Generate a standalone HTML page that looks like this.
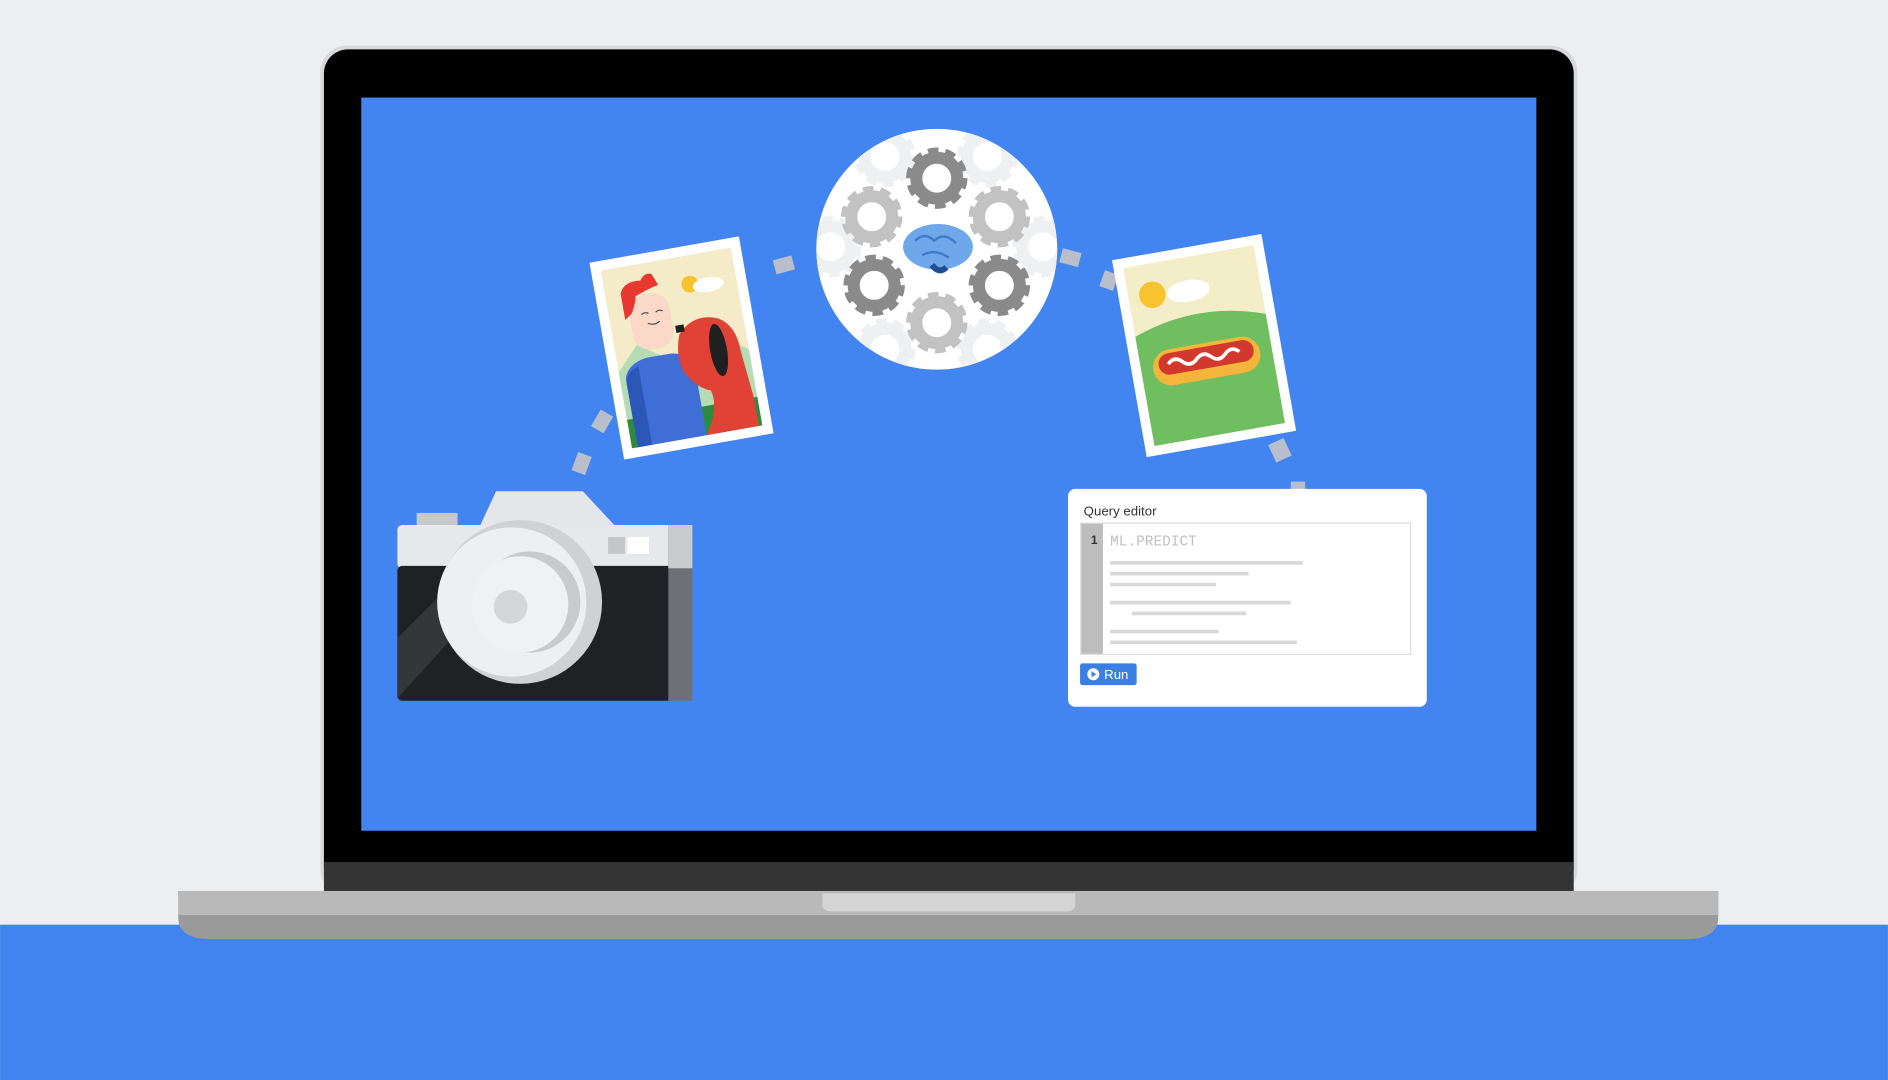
<!DOCTYPE html>
<html><head><meta charset="utf-8"><style>html,body{margin:0;padding:0;background:#eceef0;overflow:hidden}svg{display:block}</style></head>
<body>
<svg width="1888" height="1080" viewBox="0 0 1568 897" xmlns="http://www.w3.org/2000/svg">
<defs>
<g id="gear"><circle r="17" fill="none" stroke-width="10"/><circle r="22.5" fill="none" stroke-width="6" stroke-dasharray="8.5 5.6"/></g>
<clipPath id="cc"><circle cx="778" cy="207" r="100"/></clipPath>
<clipPath id="p1"><rect x="511" y="214" width="110" height="150"/></clipPath>
</defs>
<rect width="1568" height="897" fill="#eceef0"/>
<rect x="0" y="768" width="1568" height="129" fill="#4184f0"/>
<!-- lid -->
<rect x="266" y="38" width="1044" height="706" rx="22" fill="#d6d8da"/>
<rect x="269" y="41" width="1038" height="700" rx="20" fill="#000"/>
<rect x="269" y="716" width="1038" height="25" fill="#343434"/>
<rect x="300" y="81" width="976" height="609" fill="#4285f0"/>
<!-- base -->
<path d="M148 740 H1427 V762 Q1427 780 1400 780 H175 Q148 780 148 762 Z" fill="#9a9a9a"/>
<rect x="148" y="740" width="1279" height="20" fill="#b9b9b9"/>
<path d="M683 742 H893 V752 Q893 757 885 757 H691 Q683 757 683 752 Z" fill="#d4d4d4"/>
<!-- dashes -->
<g fill="#b8bfca">
<rect x="477" y="377" width="12" height="16" transform="rotate(20 483 385)"/>
<rect x="494" y="342" width="12" height="16" transform="rotate(30 500 350)"/>
<rect x="643" y="214" width="16" height="12" transform="rotate(-15 651 220)"/>
<rect x="881" y="208" width="16" height="12" transform="rotate(15 889 214)"/>
<rect x="915" y="226" width="12" height="14" transform="rotate(20 921 233)"/>
<rect x="1056" y="366" width="14" height="16" transform="rotate(-25 1063 374)"/>
<rect x="1072" y="400" width="12" height="8"/>
</g>
<!-- circle -->
<circle cx="778" cy="207" r="100" fill="#fff"/>
<g clip-path="url(#cc)">
<g stroke="#eef0f2"><use href="#gear" x="735" y="130"/><use href="#gear" x="820" y="130"/><use href="#gear" x="690" y="205"/><use href="#gear" x="866" y="205"/><use href="#gear" x="735" y="290"/><use href="#gear" x="820" y="290"/></g>
<g stroke="#8a8a8a"><use href="#gear" x="778" y="148"/><use href="#gear" x="726" y="237"/><use href="#gear" x="830" y="237"/></g>
<g stroke="#c2c2c2"><use href="#gear" x="724" y="180"/><use href="#gear" x="830" y="180"/><use href="#gear" x="778" y="268"/></g>
</g>
<ellipse cx="779" cy="205" rx="29" ry="19" fill="#6fa8ea"/>
<path d="M760 200 q8 -8 16 0 q8 -8 18 2 M766 212 q10 -6 22 2" stroke="#3e7cc9" stroke-width="2" fill="none"/>
<path d="M774 220 q6 8 12 2" stroke="#1e4f96" stroke-width="5" fill="none"/>
<!-- photo 1 -->
<g transform="rotate(-10 566 289)">
<rect x="503" y="206" width="126" height="166" fill="#fff"/>
<g clip-path="url(#p1)">
<rect x="511" y="214" width="110" height="150" fill="#f4ebc8"/>
<path d="M511 300 L530 280 L560 300 L590 278 L621 300 V364 H511 Z" fill="#b5dcb2"/>
<rect x="511" y="340" width="110" height="24" fill="#2e8b3e"/>
<circle cx="582" cy="238" r="7" fill="#f7c32e"/>
<ellipse cx="597" cy="241" rx="13" ry="6" fill="#fff"/>
<rect x="528" y="240" width="34" height="46" rx="14" fill="#fbd9c8"/>
<path d="M524 258 V236 q4 -10 18 -8 q4 -6 10 -4 l4 10 q-10 2 -20 6 q-2 8 -6 14 Z" fill="#e6382f"/>
<path d="M538 256 q3 -2 6 0 M550 256 q3 -2 6 0 M542 264 q5 3 10 0" stroke="#555" stroke-width="1" fill="none"/>
<path d="M516 364 V306 q4 -12 20 -14 h20 q16 2 18 14 V364 Z" fill="#3e6ed6"/>
<path d="M516 364 V310 q2 -10 12 -12 V364 Z" fill="#2b57b8"/>
<path d="M566 278 q14 -16 34 -8 q14 8 14 30 l4 40 v24 h-44 q14 -20 10 -36 q-12 -4 -20 -20 q-4 -14 2 -30 Z" fill="#e04236"/>
<ellipse cx="596" cy="296" rx="7" ry="22" fill="#202020"/>
<rect x="564" y="270" width="7" height="6" fill="#202020"/>
</g>
</g>
<!-- photo 2 -->
<g transform="rotate(-10 1000 287)">
<rect x="937" y="204" width="126" height="166" fill="#fff"/>
<rect x="945" y="212" width="110" height="150" fill="#f3edc8"/>
<path d="M945 270 Q1000 250 1055 270 V362 H945 Z" fill="#6fbf60"/>
<circle cx="965" cy="238" r="11" fill="#f7c32e"/>
<ellipse cx="995" cy="240" rx="18" ry="9" fill="#fff"/>
<rect x="955" y="285" width="90" height="30" rx="15" fill="#f4b63a"/>
<rect x="960" y="288" width="80" height="18" rx="9" fill="#d2382b"/>
<path d="M968 297 q6 -6 12 0 t12 0 t12 0 t12 0 t12 0" stroke="#fff" stroke-width="3" fill="none"/>
</g>
<!-- camera -->
<rect x="346" y="426" width="34" height="14" fill="#c6c8cc"/>
<path d="M398 438 L412 408 H484 L512 438 Z" fill="#e4e6ea"/>
<rect x="330" y="436" width="245" height="36" rx="4" fill="#e6e8ec"/>
<rect x="330" y="470" width="230" height="112" rx="4" fill="#1f2124"/>
<rect x="555" y="436" width="20" height="146" fill="#6e7076"/>
<rect x="555" y="436" width="20" height="36" fill="#c9cbce"/>
<path d="M330 530 L390 470 H430 L330 580 Z" fill="#3a3c40" opacity=".8"/>
<rect x="505" y="446" width="14" height="14" fill="#c4c6ca"/><rect x="521" y="446" width="18" height="14" fill="#fff"/>
<circle cx="432" cy="500" r="68" fill="#cfd1d4"/>
<circle cx="425" cy="500" r="62" fill="#eeeff1"/>
<circle cx="440" cy="500" r="42" fill="#c8cacd"/>
<circle cx="432" cy="502" r="40" fill="#f0f1f2"/>
<circle cx="424" cy="504" r="14" fill="#d4d6d8"/>
<!-- query editor -->
<rect x="887" y="406" width="298" height="181" rx="6" fill="#fff"/>
<text x="900" y="428" font-family="Liberation Sans, sans-serif" font-size="11" fill="#333">Query editor</text>
<rect x="897.5" y="434.5" width="274" height="109" fill="#fff" stroke="#ddd"/>
<rect x="898" y="435" width="18" height="108" fill="#bdbdbd"/>
<text x="906" y="452" font-family="Liberation Sans, sans-serif" font-size="10" font-weight="bold" fill="#333">1</text>
<text x="922" y="453" font-family="Liberation Mono, monospace" font-size="12" fill="#c0c0c0">ML.PREDICT</text>
<g fill="#d8d8d8"><rect x="922" y="466" width="160" height="3"/><rect x="922" y="475" width="115" height="3"/><rect x="922" y="484" width="88" height="3"/><rect x="922" y="499" width="150" height="3"/><rect x="940" y="508" width="95" height="3"/><rect x="922" y="523" width="90" height="3"/><rect x="922" y="532" width="155" height="3"/></g>
<rect x="897" y="551" width="47" height="18" rx="2" fill="#3c7fe2"/>
<circle cx="908" cy="560" r="5" fill="#fff"/><path d="M906.5 557.5 L910.5 560 L906.5 562.5 Z" fill="#3c7fe2"/>
<text x="917" y="564" font-family="Liberation Sans, sans-serif" font-size="11" fill="#fff">Run</text>
</svg>
</body></html>
